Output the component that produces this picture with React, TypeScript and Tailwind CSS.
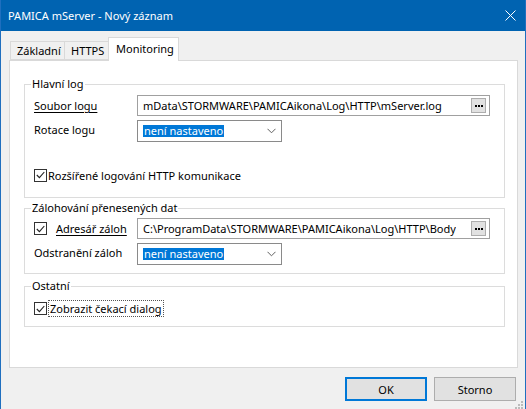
import React from 'react';

const font = { fontFamily: '"Segoe UI", "Noto Sans", sans-serif' };

function Check() {
  return (
    <span className="w-[13px] h-[13px] border border-[#333] bg-white flex items-center justify-center shrink-0">
      <svg width="9" height="8" viewBox="0 0 9 8" fill="none">
        <path d="M0.8 4 L3.4 6.6 L8.3 1" stroke="#222" strokeWidth="1.1" />
      </svg>
    </span>
  );
}

function Ellipsis() {
  return (
    <span className="w-[15px] h-[15px] mr-[3px] shrink-0 bg-[#e1e1e1] border border-[#adadad] flex items-center justify-center gap-[1px]">
      <span className="w-[2px] h-[2px] bg-black" />
      <span className="w-[2px] h-[2px] bg-black" />
      <span className="w-[2px] h-[2px] bg-black" />
    </span>
  );
}

function PathInput({ value }: { value: string }) {
  return (
    <div className="w-[353px] h-[21px] shrink-0 border border-[#a0a0a0] bg-white flex items-center justify-between">
      <span className="pl-[5px] min-w-0 whitespace-nowrap overflow-hidden">{value}</span>
      <Ellipsis />
    </div>
  );
}

function Combo() {
  return (
    <div className="w-[145px] h-[22px] shrink-0 border border-[#8a8a8a] bg-white flex items-center justify-between">
      <span className="ml-[5px] px-[1px] bg-[#0078d7] text-white leading-[12px] h-[12px]">není nastaveno</span>
      <svg width="9" height="6" viewBox="0 0 9 6" className="mr-[5px]" fill="none">
        <path d="M0.5 0.8 L4.5 4.8 L8.5 0.8" stroke="#606060" strokeWidth="1" />
      </svg>
    </div>
  );
}

function Group({ title, className, children }: { title: string; className: string; children: React.ReactNode }) {
  return (
    <fieldset className={`border border-[#dcdcdc] p-0 ${className}`}>
      <legend className="ml-[6px] px-[1px] leading-[16px]">{title}</legend>
      {children}
    </fieldset>
  );
}

export default function App() {
  return (
    <div className="w-[526px] h-[409px] flex flex-col bg-[#f0f0f0] border-x border-[#1f6fbf] text-[11px] leading-[15px] text-black overflow-hidden" style={font}>
      {/* Title bar */}
      <div className="h-[31px] shrink-0 bg-[#0063b1] flex items-center justify-between pl-[8px] pr-[10px] -mx-px text-white">
        <span className="text-[11px]">PAMICA mServer - Nový záznam</span>
        <svg width="11" height="11" viewBox="0 0 11 11" fill="none">
          <path d="M0.5 0.5 L10.5 10.5 M10.5 0.5 L0.5 10.5" stroke="#fff" strokeWidth="1" />
        </svg>
      </div>

      <div className="flex-1 flex flex-col px-[8px] pt-[6px]">
        {/* Tabs */}
        <div className="flex items-end h-[23px] pl-[1px]">
          <div className="h-[19px] w-[54px] shrink-0 border border-[#d9d9d9] border-r-0 flex items-center pl-[6px]">Základní</div>
          <div className="h-[19px] w-[44px] shrink-0 border border-[#d9d9d9] border-r-0 flex items-center pl-[6px]">HTTPS</div>
          <div className="h-[24px] w-[71px] shrink-0 -mb-px relative z-10 bg-white border border-b-0 border-[#d9d9d9] flex items-center pl-[7px] pb-[2px]">Monitoring</div>
        </div>

        {/* Panel */}
        <div className="w-[509px] h-[308px] bg-white border border-[#d9d9d9] flex flex-col pl-[14px] pt-[15px]">
          <Group title="Hlavní log" className="w-[481px] pb-[14px]">
            <div className="flex items-center mt-[3px]">
              <span className="w-[112px] shrink-0 whitespace-nowrap pl-[9px] underline underline-offset-2">Soubor logu</span>
              <PathInput value="mData\STORMWARE\PAMICAikona\Log\HTTP\mServer.log" />
            </div>
            <div className="flex items-start mt-[4px]">
              <span className="w-[112px] shrink-0 whitespace-nowrap pl-[9px] leading-[20px]">Rotace logu</span>
              <Combo />
            </div>
            <div className="flex items-center mt-[25px] pl-[9px] gap-[1px] h-[16px]">
              <Check />
              <span className="whitespace-nowrap">Rozšířené logování HTTP komunikace</span>
            </div>
          </Group>

          <Group title="Zálohování přenesených dat" className="w-[481px] mt-[2px] pb-[8px]">
            <div className="flex items-center mt-[2px]">
              <div className="w-[112px] shrink-0 pl-[9px] flex items-center gap-[9px]">
                <Check />
                <span className="whitespace-nowrap underline underline-offset-2">Adresář záloh</span>
              </div>
              <PathInput value="C:\ProgramData\STORMWARE\PAMICAikona\Log\HTTP\Body" />
            </div>
            <div className="flex items-start mt-[4px]">
              <span className="w-[112px] shrink-0 whitespace-nowrap pl-[9px] leading-[20px]">Odstranění záloh</span>
              <Combo />
            </div>
          </Group>

          <Group title="Ostatní" className="w-[481px] mt-[4px] pb-[9px]">
            <div className="flex items-center mt-[6px] pl-[9px] gap-[1px] h-[17px]">
              <Check />
              <span className="whitespace-nowrap border border-dotted border-[#555] px-[1px] leading-[15px]">Zobrazit čekací dialog</span>
            </div>
          </Group>
        </div>

        {/* Buttons */}
        <div className="flex justify-end gap-[7px] mt-[9px] pr-[1px]">
          <button className="w-[82px] h-[24px] bg-[#e1e1e1] border-2 border-[#0078d7]">OK</button>
          <button className="w-[82px] h-[24px] bg-[#e1e1e1] border border-[#adadad]">Storno</button>
        </div>
        <div className="flex justify-end mt-auto mb-[1px] mr-[-6px]">
          <svg width="8" height="8" viewBox="0 0 8 8">
            <rect x="6" y="0" width="2" height="2" fill="#bbb" />
            <rect x="3" y="3" width="2" height="2" fill="#bbb" />
            <rect x="6" y="3" width="2" height="2" fill="#bbb" />
            <rect x="0" y="6" width="2" height="2" fill="#bbb" />
            <rect x="3" y="6" width="2" height="2" fill="#bbb" />
            <rect x="6" y="6" width="2" height="2" fill="#bbb" />
          </svg>
        </div>
      </div>
    </div>
  );
}
